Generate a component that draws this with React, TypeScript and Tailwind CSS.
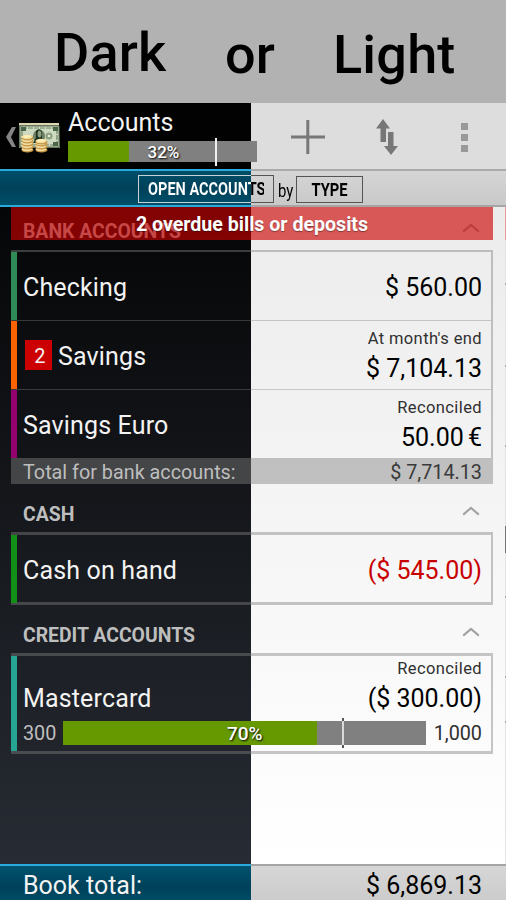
import type { ReactNode } from "react";

function Chevron() {
  return (
    <svg className="mt-[1.5px] h-[10px] w-[18px]" viewBox="0 0 18 10" fill="none">
      <path d="M1.2 8.6 9 2l7.8 6.6" stroke="#a2a2a2" strokeWidth="2.1" />
    </svg>
  );
}

function SectionHeader({ title, className }: { title: string; className: string }) {
  return (
    <div className={`flex items-start justify-between pr-[13px] pl-3 ${className}`}>
      <h2 className="text-[19.4px] leading-[22px] font-bold text-[#bebebe]">{title}</h2>
      <Chevron />
    </div>
  );
}

type RowProps = {
  name: string;
  amount: ReactNode;
  note?: string;
  bar: string;
  badge?: string;
  negative?: boolean;
  height?: string;
  children?: ReactNode;
};

function Row({ name, amount, note, bar, badge, negative, height = "h-[68px]", children }: RowProps) {
  return (
    <div className={`flex ${height}`}>
      <div className={`w-[6px] ${bar}`} />
      <div className="flex-1 pr-[9px] pl-[6px]">
        <div className="flex h-[68px] justify-between">
          <div className={`flex text-[25px] leading-[30px] tracking-[0.15px] text-[#f3f3f3] ${children ? "pt-[28px]" : "pt-[21px]"}`}>
            {badge && (
              <span className="-mt-[2px] mr-[6px] ml-[2px] flex h-[30px] w-[27px] items-center justify-center bg-[#cc0000] pt-px pl-[3px] text-[20px]">
                {badge}
              </span>
            )}
            {name}
          </div>
          <div className={`text-right ${note ? (children ? "pt-[3px]" : "pt-[8px]") : "pt-[21px]"}`}>
            {note && (
              <div className="mb-[5px] text-[16.5px] leading-[20px] tracking-[0.4px] text-[#303030]">{note}</div>
            )}
            <div className={`text-[25px] leading-[30px] ${negative ? "text-[#c80000]" : "text-black"}`}>{amount}</div>
          </div>
        </div>
        {children}
      </div>
    </div>
  );
}

function MoneyIcon() {
  return (
    <svg className="h-[32px] w-[43px]" viewBox="0 0 43 32">
      <path d="M1 1h40l1 25H1z" fill="#78856c" />
      <path d="M1 1h40v2H1z" fill="#ddd6b1" />
      <path d="M2 4h39v21H2z" fill="#dde3cf" stroke="#52684c" />
      <path d="M4 6h35v17H4z" fill="#cdd9c0" stroke="#68805d" strokeWidth="1.2" strokeDasharray="5 1" />
      <path d="M3 5h5v4H3zm32 0h5v4h-5zm0 15h5v4h-5z" fill="#4b6548" />
      <ellipse cx="21" cy="14.500" rx="6" ry="7" fill="#6c8061" />
      <path d="M18 9q4-4 6 1v6l3 5H15l3-5z" fill="#182d1b" />
      <ellipse cx="21.500" cy="12" rx="2" ry="3.500" fill="#8fa080" />
      <circle cx="31" cy="14" r="3.500" fill="#8da17f" />
      <circle cx="31" cy="14" r="1.300" fill="#e8ead9" />
      {[28, 25, 22, 19, 16].map((y) => (
        <g key={y}>
          <ellipse cx="9.500" cy={y} rx="6" ry="2.600" fill="#c39442" />
          <ellipse cx="9" cy={y - 1} rx="5.500" ry="2.200" fill="#f3dca0" />
        </g>
      ))}
      {[28, 25, 22, 20].map((y) => (
        <g key={y}>
          <ellipse cx="23.500" cy={y} rx="6" ry="2.600" fill="#c39442" />
          <ellipse cx="23" cy={y - 1} rx="5.500" ry="2.200" fill="#f3dca0" />
        </g>
      ))}
      <ellipse cx="9" cy="14.500" rx="4" ry="1.300" fill="#fff0b6" />
      <ellipse cx="23" cy="18.500" rx="4" ry="1.300" fill="#fff0b6" />
    </svg>
  );
}

function ScrollEdge() {
  return (
    <div className="absolute top-0 right-0 h-full w-px bg-[#e4e4e4]">
      <div className="absolute top-0 h-[33px] w-px bg-[#ef9c9c]" />
      <div className="absolute top-[319px] h-[27px] w-px bg-[#777]" />
      {["top-[76px]", "top-[158px]", "top-[238px]", "top-[389px]", "top-[469px]", "top-[514px]"].map((top) => (
        <div key={top} className={`absolute h-[2px] w-px bg-[#aaa] ${top}`} />
      ))}
    </div>
  );
}

export default function App() {
  return (
    <div className="flex h-[900px] w-[506px] flex-col overflow-hidden bg-white font-['Roboto',sans-serif]">
      <div className="flex h-[103px] items-start bg-[#b2b2b2] text-[54px] leading-[64px] font-medium text-black">
        <span className="ml-[54px] w-[171px] pt-[21px] tracking-[0.2px]">Dark</span>
        <span className="w-[108px] pt-[23px]">or</span>
        <span className="pt-[23px] tracking-[0.2px]">Light</span>
      </div>

      <header className="flex h-[66px] bg-[linear-gradient(to_right,#020202_251px,#dddddd_251px)]">
        <svg className="mt-[23px] ml-[6px] h-[22px] w-[11px]" viewBox="0 0 11 22">
          <path d="M6 1h4L5 11l5 10H6L0 11z" fill="#858585" />
        </svg>
        <div className="mt-[19px] ml-[1px] h-[32px] w-[43px]">
          <MoneyIcon />
        </div>
        <div className="ml-[7px] w-[189px]">
          <h1 className="pt-[5px] text-[25px] leading-[30px] text-[#f3f3f3]">Accounts</h1>
          <div className="relative mt-[3px] flex h-[21px] bg-[#808080]">
            <div className="h-full w-[61px] bg-[#669900]" />
            <div className="absolute -top-[3px] left-[147px] h-[28px] w-[2px] bg-[#f0f0f0]" />
            <span className="absolute top-0 left-[79.5px] text-[17px] leading-[22px] font-medium text-white [text-shadow:1px_1px_2px_#000]">
              32%
            </span>
          </div>
        </div>
        <div className="mt-[17px] ml-[34px] flex items-start">
          <svg className="h-[34px] w-[34px]" viewBox="0 0 34 34">
            <path d="M15.300 0h3v15.500H34v3H18.300V34h-3V18.500H0v-3h15.300z" fill="#777" />
          </svg>
          <svg className="-mt-px ml-[51px] h-[36px] w-[22px]" viewBox="0 0 22 36">
            <path d="M7 0l7 9.500h-4V23H4.500V9.500H0zM12 13h5.500v14H22l-7 9-7-9h4z" fill="#777" />
          </svg>
          <div className="mt-[3px] ml-[63px] flex flex-col gap-[4px]">
            <div className="size-[7px] bg-[#999]" />
            <div className="size-[7px] bg-[#999]" />
            <div className="size-[7px] bg-[#999]" />
          </div>
        </div>
      </header>
      <div className="h-[2px] bg-[linear-gradient(to_right,#29aadb_251px,#aaaaaa_251px)]" />

      <div className="flex h-[34px] bg-[linear-gradient(#004f6a,#004159_50%,#004f6a),linear-gradient(#d5d5d5,#c9c9c9)] bg-[length:251px_100%,100%_100%] bg-no-repeat pt-[4px] pl-[138px]">
        <button className="h-[28px] w-[136px] border pl-[9px] text-left text-[17.5px] leading-[27px] font-bold [border-image:linear-gradient(to_right,#c6d4d8_113px,#555_113px)_1]">
          <span className="inline-block w-[140px] origin-left scale-x-[0.83] bg-[linear-gradient(to_right,#fff_124px,#000_124px)] bg-clip-text whitespace-nowrap text-transparent">
            OPEN ACCOUNTS
          </span>
        </button>
        <span className="ml-[4px] w-[18px] text-[18px] leading-[31px] text-black">
          <span className="inline-block origin-left scale-x-[0.83]">by</span>
        </span>
        <button className="mt-[1px] h-[27px] w-[67px] border border-[#555] text-[17.5px] leading-[27px] font-bold text-black">
          <span className="inline-block scale-x-[0.84]">TYPE</span>
        </button>
      </div>
      <div className="h-[2px] bg-[linear-gradient(to_right,#29aadb_251px,#a5a5a5_251px)]" />

      <main className="relative h-[657px] bg-[linear-gradient(#050607,#272b33),linear-gradient(#ececec,#ffffff)] bg-[length:251px_100%,100%_100%] bg-no-repeat pr-[13px] pl-[11px]">
        <SectionHeader title="BANK ACCOUNTS" className="h-[43px] pt-[14px]" />
        <div className="absolute top-0 left-[11px] h-[33px] w-[482px] bg-[#cc0000]/63 text-center text-[19.6px] leading-[36px] font-bold text-white [text-shadow:0_1px_1px_#0006]">
          2 overdue bills or deposits
        </div>

        <section className="h-[234px]">
          <div className="h-[208px] border-t-2 border-r-2 border-[#80808070]">
            <Row name="Checking" amount="$ 560.00" bar="bg-[#2e8b57]" />
            <div className="h-px bg-[#80808060]" />
            <Row name="Savings" amount="$ 7,104.13" note="At month's end" bar="bg-[#f96400]" badge="2" />
            <div className="h-px bg-[#80808060]" />
            <Row
              name="Savings Euro"
              amount={<span className="[word-spacing:-2px]">50.00 €</span>}
              note="Reconciled"
              bar="bg-[#95006f]"
            />
          </div>
          <div className="flex h-[26px] justify-between bg-[#80808073] pr-[11px] pl-3 text-[19.8px] leading-[29px]">
            <span className="text-[#bebebe]">Total for bank accounts:</span>
            <span className="text-[#3a3a3a]">$ 7,714.13</span>
          </div>
        </section>

        <SectionHeader title="CASH" className="h-[48px] pt-[20px]" />
        <section className="h-[73px] border-y-[3px] border-r-2 border-[#80808070]">
          <Row name="Cash on hand" amount="($ 545.00)" bar="bg-[#128f16]" negative />
        </section>

        <SectionHeader title="CREDIT ACCOUNTS" className="h-[48px] pt-[20px]" />
        <section className="h-[101px] border-y-[3px] border-r-2 border-[#80808070]">
          <Row name="Mastercard" amount="($ 300.00)" note="Reconciled" bar="bg-[#26a594]" height="h-[95px]">
            <div className="-mt-[3px] flex h-[24px] text-[19.8px] leading-[26px]">
              <span className="w-[40px] text-[#bebebe]">300</span>
              <div className="relative h-[24px] w-[363px] bg-[#808080]">
                <div className="h-full w-[254px] bg-[#669900]" />
                <div className="absolute -top-[3px] left-[279px] h-[30px] w-[2px] bg-[#555]" />
                <div className="absolute top-0 left-[279px] h-[24px] w-[2px] bg-[#d9d9d9]" />
                <span className="absolute top-0 left-[164px] text-[19px] leading-[25px] font-medium text-white [text-shadow:1px_1px_2px_#000]">
                  70%
                </span>
              </div>
              <span className="ml-auto text-[#303030]">1,000</span>
            </div>
          </Row>
        </section>
        <ScrollEdge />
      </main>

      <footer className="flex h-[36px] justify-between border-t-2 bg-[linear-gradient(#005370,#004159_60%,#004b65),linear-gradient(#d6d6d6,#cccccc)] bg-[length:251px_100%,100%_100%] bg-no-repeat pr-[24px] pl-[23px] text-[25px] leading-[40px] [border-image:linear-gradient(to_right,#29aadb_251px,#a5a5a5_251px)_1]">
        <span className="text-[#f3f3f3]">Book total:</span>
        <span className="text-black">$ 6,869.13</span>
      </footer>
    </div>
  );
}
